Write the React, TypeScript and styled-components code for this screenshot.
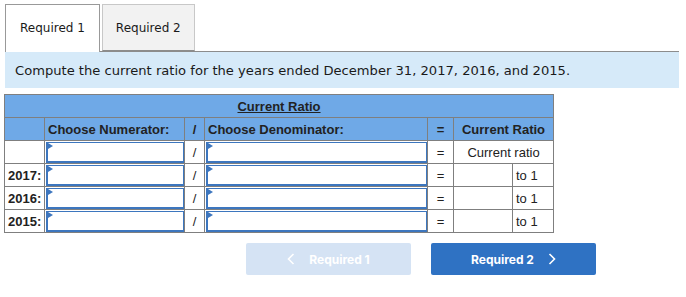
import React from "react";
import styled, { createGlobalStyle } from "styled-components";

const Global = createGlobalStyle`
  html, body { margin: 0; padding: 0; background: #fff; }
  body { font-family: "DejaVu Sans", Verdana, sans-serif; }
`;

const Page = styled.div`
  padding: 4px 7px 0 4px;
  width: 686px;
  box-sizing: border-box;
`;

const TabBar = styled.div`
  display: flex;
  align-items: flex-end;
  gap: 2px;
  border-bottom: 1px solid #8c8c8c;
  margin-left: 1px;
  height: 47px;
`;

const Tab = styled.div<{ $active?: boolean }>`
  box-sizing: border-box;
  height: ${(p) => (p.$active ? "48px" : "47px")};
  margin-bottom: ${(p) => (p.$active ? "-1px" : "0")};
  padding: 0 ${(p) => (p.$active ? "14px" : "13px")};
  display: flex;
  align-items: center;
  font-size: 12px;
  color: #1a1a1a;
  background: ${(p) => (p.$active ? "#fff" : "#f2f2f2")};
  border: 1px solid ${(p) => (p.$active ? "#999" : "#c8c8c8")};
  border-bottom: ${(p) => (p.$active ? "none" : "1px solid #8c8c8c")};
  padding-bottom: ${(p) => (p.$active ? "1px" : "0")};
`;

const Info = styled.div`
  margin-left: 1px;
  height: 36px;
  background: #d6eaf9;
  display: flex;
  align-items: center;
  padding-left: 10px;
  font-size: 13.1px;
  color: #1a1a1a;
`;

const Table = styled.table`
  margin-top: 6px;
  border-collapse: collapse;
  table-layout: fixed;
  width: 549px;
  font-family: "Liberation Sans", Arial, sans-serif;
  font-size: 13px;
  color: #222;
`;

const Cell = styled.td<{ $head?: boolean; $align?: string; $bold?: boolean }>`
  border: 1px solid #7f7f7f;
  height: 23px;
  padding: 0 3px;
  box-sizing: border-box;
  background: ${(p) => (p.$head ? "#6fa9e7" : "#fff")};
  text-align: ${(p) => p.$align || "left"};
  font-weight: ${(p) => (p.$bold ? 700 : 400)};
  white-space: nowrap;
  vertical-align: middle;
`;

const SelectCell = styled.td`
  border: 1px solid #7f7f7f;
  padding: 1px 0 0 1px;
  height: 23px;
  box-sizing: border-box;
  background: #fff;
  vertical-align: top;
`;

const SelectBox = styled.div`
  position: relative;
  box-sizing: border-box;
  height: 21px;
  border: 1px solid #3d76be;
  border-bottom-width: 2px;
  border-left-width: 2px;
  background: #fff;
`;

const Flag = styled.span`
  position: absolute;
  left: 0;
  top: 0;
  width: 0;
  height: 0;
  border-top: 3px solid transparent;
  border-bottom: 3px solid transparent;
  border-left: 5px solid #3d76be;
`;

const Title = styled.span`
  text-decoration: underline;
  font-weight: 700;
`;

const ButtonRow = styled.div`
  display: flex;
  gap: 20px;
  margin-top: 10px;
  padding-left: 242px;
`;

const NavButton = styled.button<{ $disabled?: boolean }>`
  width: 165px;
  height: 32px;
  border: none;
  border-radius: 2px;
  background: ${(p) => (p.$disabled ? "#d5e3f4" : "#2f72c3")};
  color: #fff;
  font-family: Inter, "Liberation Sans", Arial, sans-serif;
  font-weight: 700;
  font-size: 12px;
  display: flex;
  align-items: center;
  justify-content: center;
  gap: 14px;
  padding: 0;
  cursor: ${(p) => (p.$disabled ? "default" : "pointer")};
`;

const Chevron = ({ dir }: { dir: "left" | "right" }) => (
  <svg width="8" height="12" viewBox="0 0 8 12">
    <path
      d={dir === "left" ? "M6.5 1 L1.5 6 L6.5 11" : "M1.5 1 L6.5 6 L1.5 11"}
      fill="none"
      stroke="#fff"
      strokeWidth="1.6"
    />
  </svg>
);

const Select = () => (
  <SelectCell>
    <SelectBox>
      <Flag />
    </SelectBox>
  </SelectCell>
);

const years = ["2017:", "2016:", "2015:"];

export default function App() {
  return (
    <Page>
      <Global />
      <TabBar>
        <Tab $active>Required 1</Tab>
        <Tab>Required 2</Tab>
      </TabBar>
      <Info>Compute the current ratio for the years ended December 31, 2017, 2016, and 2015.</Info>
      <Table>
        <colgroup>
          <col style={{ width: 40 }} />
          <col style={{ width: 140 }} />
          <col style={{ width: 20 }} />
          <col style={{ width: 223 }} />
          <col style={{ width: 26 }} />
          <col style={{ width: 59 }} />
          <col style={{ width: 41 }} />
        </colgroup>
        <tbody>
          <tr>
            <Cell $head colSpan={7} $align="center">
              <Title>Current Ratio</Title>
            </Cell>
          </tr>
          <tr>
            <Cell $head />
            <Cell $head $bold>Choose Numerator:</Cell>
            <Cell $head $bold $align="center">/</Cell>
            <Cell $head $bold>Choose Denominator:</Cell>
            <Cell $head $bold $align="center">=</Cell>
            <Cell $head $bold $align="center" colSpan={2}>Current Ratio</Cell>
          </tr>
          <tr>
            <Cell />
            <Select />
            <Cell $align="center">/</Cell>
            <Select />
            <Cell $align="center">=</Cell>
            <Cell $align="center" colSpan={2}>Current ratio</Cell>
          </tr>
          {years.map((y) => (
            <tr key={y}>
              <Cell $bold>{y}</Cell>
              <Select />
              <Cell $align="center">/</Cell>
              <Select />
              <Cell $align="center">=</Cell>
              <Cell />
              <Cell>to 1</Cell>
            </tr>
          ))}
        </tbody>
      </Table>
      <ButtonRow>
        <NavButton $disabled>
          <Chevron dir="left" />
          Required 1
        </NavButton>
        <NavButton>
          Required 2
          <Chevron dir="right" />
        </NavButton>
      </ButtonRow>
    </Page>
  );
}
